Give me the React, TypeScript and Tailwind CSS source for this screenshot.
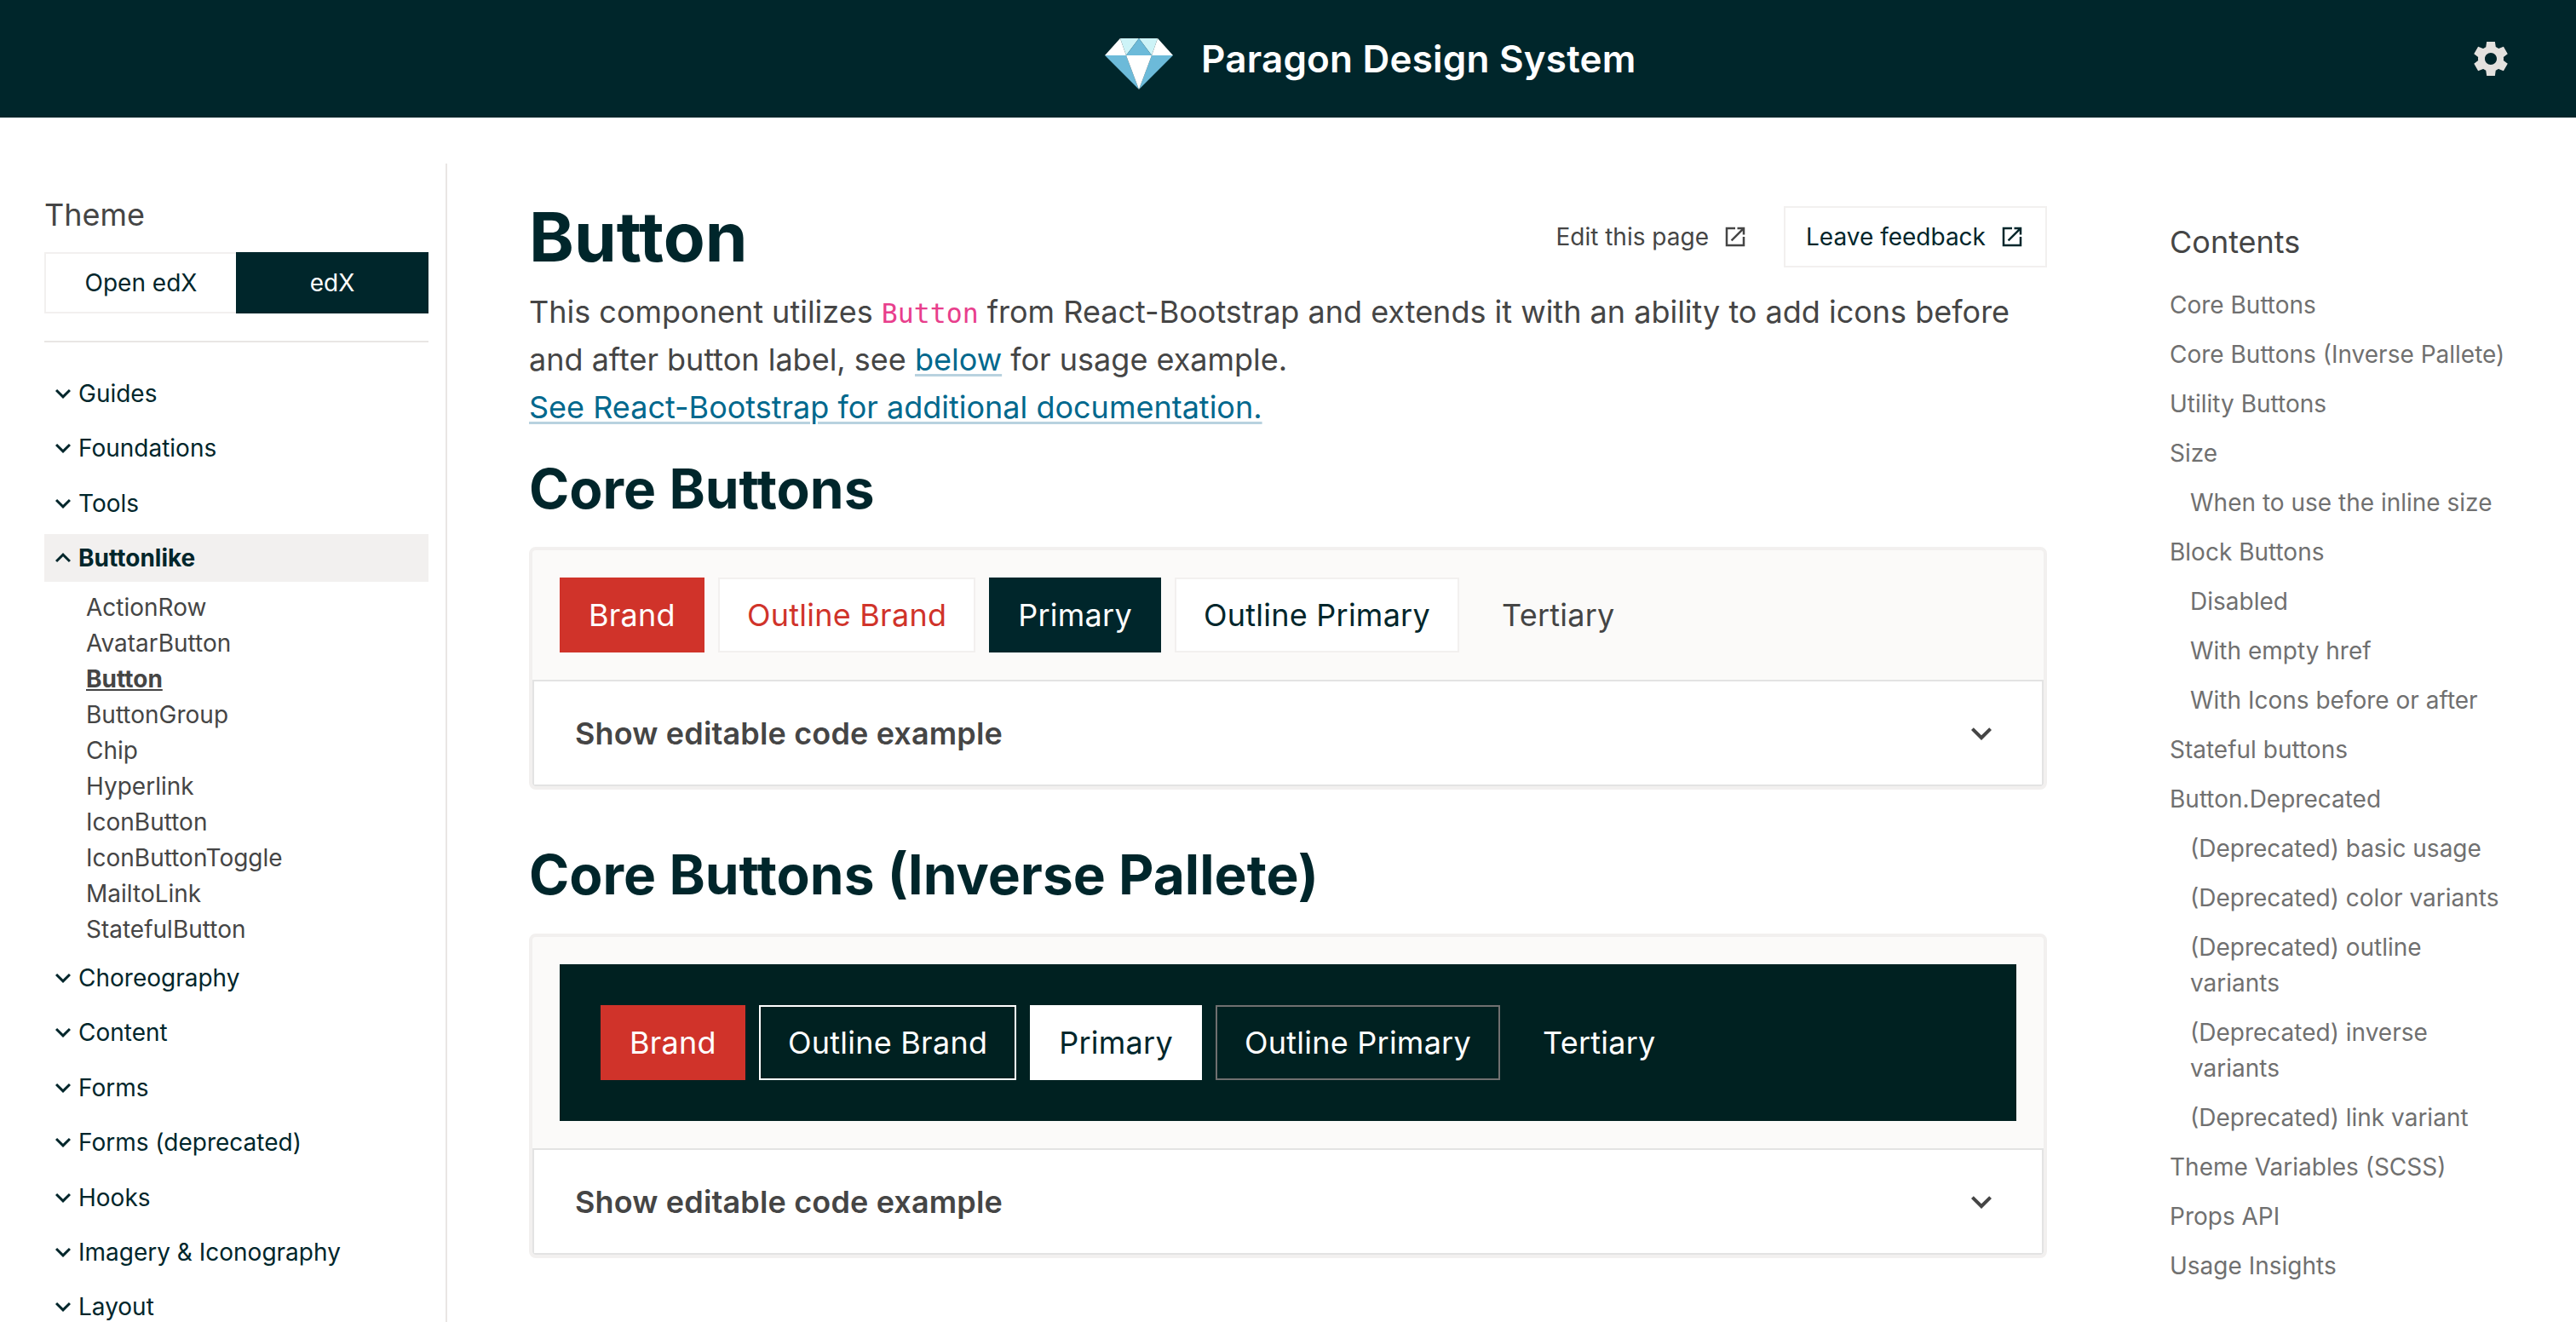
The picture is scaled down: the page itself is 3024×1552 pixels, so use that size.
const NAV_TOP = ["Guides", "Foundations", "Tools"];
const NAV_SUB = ["ActionRow", "AvatarButton", "Button", "ButtonGroup", "Chip", "Hyperlink", "IconButton", "IconButtonToggle", "MailtoLink", "StatefulButton"];
const NAV_BOTTOM = ["Choreography", "Content", "Forms", "Forms (deprecated)", "Hooks", "Imagery & Iconography", "Layout"];

const TOC: [string, boolean][] = [
  ["Core Buttons", false],
  ["Core Buttons (Inverse Pallete)", false],
  ["Utility Buttons", false],
  ["Size", false],
  ["When to use the inline size", true],
  ["Block Buttons", false],
  ["Disabled", true],
  ["With empty href", true],
  ["With Icons before or after", true],
  ["Stateful buttons", false],
  ["Button.Deprecated", false],
  ["(Deprecated) basic usage", true],
  ["(Deprecated) color variants", true],
  ["(Deprecated) outline variants", true],
  ["(Deprecated) inverse variants", true],
  ["(Deprecated) link variant", true],
  ["Theme Variables (SCSS)", false],
  ["Props API", false],
  ["Usage Insights", false],
];

function Diamond() {
  return (
    <svg viewBox="0 0 80 60" className="mt-3 h-[60px] w-[80px] shrink-0">
      <polygon points="18,0 40,0 25,20" fill="#cdf3f7" />
      <polygon points="62,0 40,0 55,20" fill="#cdf3f7" />
      <polygon points="18,0 25,20 0,20" fill="#ffffff" />
      <polygon points="62,0 55,20 80,20" fill="#ffffff" />
      <polygon points="40,0 55,20 25,20" fill="#6cbad9" />
      <polygon points="0,20 25,20 40,60" fill="#6cbad9" />
      <polygon points="80,20 55,20 40,60" fill="#6cbad9" />
      <polygon points="25,20 55,20 40,60" fill="#ffffff" />
    </svg>
  );
}

function Gear() {
  return (
    <svg viewBox="0 0 24 24" className="h-12 w-12" fill="#e4e1de">
      <path d="M19.44 12.99l-.01.02c.04-.33.08-.67.08-1.01 0-.34-.03-.66-.07-.99l.01.02 2.44-1.92-2.43-4.22-2.87 1.16.01.01c-.52-.4-1.09-.74-1.71-1h.01L14.44 2H9.57l-.44 3.07h.01c-.62.26-1.19.6-1.71 1l.01-.01-2.88-1.17-2.44 4.22 2.44 1.92.01-.02c-.04.33-.07.65-.07.99 0 .34.03.68.08 1.01l-.01-.02-2.1 1.65-.33.26 2.43 4.2 2.88-1.15-.02-.04c.53.41 1.1.75 1.73 1.01h-.03L9.58 22h4.85s.03-.18.06-.42l.38-2.65h-.01c.62-.26 1.2-.6 1.73-1.01l-.02.04 2.88 1.15 2.43-4.2s-.14-.12-.33-.26l-2.11-1.66zM12 15.5c-1.93 0-3.5-1.57-3.5-3.5s1.57-3.5 3.5-3.5 3.5 1.57 3.5 3.5-1.57 3.5-3.5 3.5z" />
    </svg>
  );
}

function Launch() {
  return (
    <svg viewBox="0 0 24 24" className="h-[30px] w-[30px] shrink-0" fill="currentColor">
      <path d="M19 19H5V5h7V3H3v18h18v-9h-2v7zM14 3v2h3.59l-9.83 9.83 1.41 1.41L19 6.41V10h2V3h-7z" />
    </svg>
  );
}

function Chevron({ up }: { up?: boolean }) {
  return (
    <svg viewBox="0 0 24 24" className={up ? "h-9 w-9 shrink-0 rotate-180" : "h-9 w-9 shrink-0"} fill="currentColor">
      <path d="M16.59 8.59L12 13.17 7.41 8.59 6 10l6 6 6-6z" />
    </svg>
  );
}

function NavRow({ label, active }: { label: string; active?: boolean }) {
  return (
    <div className={active ? "flex h-14 items-center bg-[#f2f0ef] pl-1 font-bold text-[#00262b]" : "flex h-14 items-center pl-1 text-[#00262b]"}>
      <Chevron up={active} />
      <span>{label}</span>
    </div>
  );
}

function Sidebar() {
  return (
    <aside className="mt-[54px] h-[1400px] w-[525px] shrink-0 border-r-2 border-[#e9e6e4] pl-[52px] pr-[20px] text-[28px] leading-[42px]">
      <h3 className="mt-[33px] text-[36px] leading-[54px] text-[#454545]">Theme</h3>
      <div className="mt-[17px] flex h-[72px]">
        <div className="flex w-[225px] items-center justify-center border-2 border-r-0 border-[#f2f0ef] text-[#00262b]">Open edX</div>
        <div className="flex w-[226px] items-center justify-center bg-[#00262b] text-white">edX</div>
      </div>
      <hr className="mt-8 border-t-2 border-[#e9e6e4]" />
      <nav className="mt-8 flex flex-col gap-[8.4px]">
        {NAV_TOP.map((label) => (
          <NavRow key={label} label={label} />
        ))}
        <NavRow label="Buttonlike" active />
        <ul className="pl-[49px] text-[#454545]">
          {NAV_SUB.map((label) => (
            <li key={label} className={label === "Button" ? "font-bold underline" : ""}>
              {label}
            </li>
          ))}
        </ul>
        {NAV_BOTTOM.map((label) => (
          <NavRow key={label} label={label} />
        ))}
      </nav>
    </aside>
  );
}

const BTN = "flex h-[88px] items-center border-2 px-8 text-[36px] tracking-[0.25px]";
const LINK = "text-[#00688d] underline decoration-[#b8d2df] decoration-[3px] underline-offset-[4px]";

function Card({ inverse }: { inverse?: boolean }) {
  const buttons = (
    <div className="flex gap-4">
      <div className={`${BTN} border-[#d0332a] bg-[#d0332a] text-white`}>Brand</div>
      {inverse ? (
        <>
          <div className={`${BTN} border-white text-white`}>Outline Brand</div>
          <div className={`${BTN} border-white bg-white text-[#00262b]`}>Primary</div>
          <div className={`${BTN} border-[#707070] text-white`}>Outline Primary</div>
          <div className={`${BTN} border-transparent text-white`}>Tertiary</div>
        </>
      ) : (
        <>
          <div className={`${BTN} border-[#f2f0ef] bg-white text-[#d0332a]`}>Outline Brand</div>
          <div className={`${BTN} border-[#00262b] bg-[#00262b] text-white`}>Primary</div>
          <div className={`${BTN} border-[#f2f0ef] bg-white text-[#00262b]`}>Outline Primary</div>
          <div className={`${BTN} border-transparent text-[#454545]`}>Tertiary</div>
        </>
      )}
    </div>
  );
  return (
    <div className="overflow-hidden rounded-lg border-4 border-[#f2f0ef] bg-[#fbfaf9]">
      <div className="p-8">{inverse ? <div className="bg-[#002121] p-12">{buttons}</div> : buttons}</div>
      <div className="flex h-[125px] items-center justify-between border-2 border-[#e3e3e3] bg-white pl-[48px] pr-[47px]">
        <span className="text-[36px] font-semibold tracking-[0.15px] text-[#454545]">Show editable code example</span>
        <svg viewBox="0 0 24 24" className="h-12 w-12 text-[#454545]" fill="currentColor">
          <path d="M16.59 8.59L12 13.17 7.41 8.59 6 10l6 6 6-6z" />
        </svg>
      </div>
    </div>
  );
}

function Main() {
  return (
    <main className="ml-[96px] w-[1782px] shrink-0 text-[#454545]">
      <div className="mt-[92px] flex items-center justify-between">
        <h1 className="text-[80px] font-bold leading-[96px] text-[#00262b]">Button</h1>
        <div className="flex items-center text-[28px]">
          <a className="flex h-[72px] items-center gap-4 px-[26px]">
            Edit this page
            <Launch />
          </a>
          <a className="ml-4 flex h-[72px] items-center gap-4 border-2 border-[#f2f0ef] px-6 text-[#00262b]">
            Leave feedback
            <Launch />
          </a>
        </div>
      </div>
      <p className="mt-3 text-[36px] leading-[56px]">
        This component utilizes{" "}
        <code className="font-['DejaVu_Sans_Mono',monospace] text-[31.5px] leading-none text-[#e83e8c]">Button</code> from React-Bootstrap and extends it with an ability to add icons before and after button label, see{" "}
        <a className={LINK}>below</a> for usage example.
        <br />
        <a className={LINK}>See React-Bootstrap for additional documentation.</a>
      </p>
      <h2 className="mt-7 text-[64px] font-bold leading-[80px] text-[#00262b]">Core Buttons</h2>
      <div className="mt-7">
        <Card />
      </div>
      <h2 className="mt-[60px] text-[64px] font-bold leading-[80px] text-[#00262b]">Core Buttons (Inverse Pallete)</h2>
      <div className="mt-[29px]">
        <Card inverse />
      </div>
    </main>
  );
}

function Toc() {
  return (
    <aside className="ml-[144px] mt-[119px] w-[400px] shrink-0">
      <h3 className="text-[36px] leading-[54px] text-[#454545]">Contents</h3>
      <ul className="mt-[26px] flex flex-col gap-4 text-[28px] leading-[42px] text-[#707070]">
        {TOC.map(([label, indent]) => (
          <li key={label} className={indent ? "pl-6" : ""}>
            {label}
          </li>
        ))}
      </ul>
    </aside>
  );
}

export default function App() {
  return (
    <div className="h-[1552px] overflow-hidden bg-white font-['Inter',sans-serif]">
      <header className="flex h-[138px] items-center bg-[#00262b] pl-[1297px] pr-[76px]">
        <Diamond />
        <span className="ml-[33px] text-[44px] font-semibold tracking-[0.2px] text-white">Paragon Design System</span>
        <div className="ml-auto">
          <Gear />
        </div>
      </header>
      <div className="flex">
        <Sidebar />
        <Main />
        <Toc />
      </div>
    </div>
  );
}
